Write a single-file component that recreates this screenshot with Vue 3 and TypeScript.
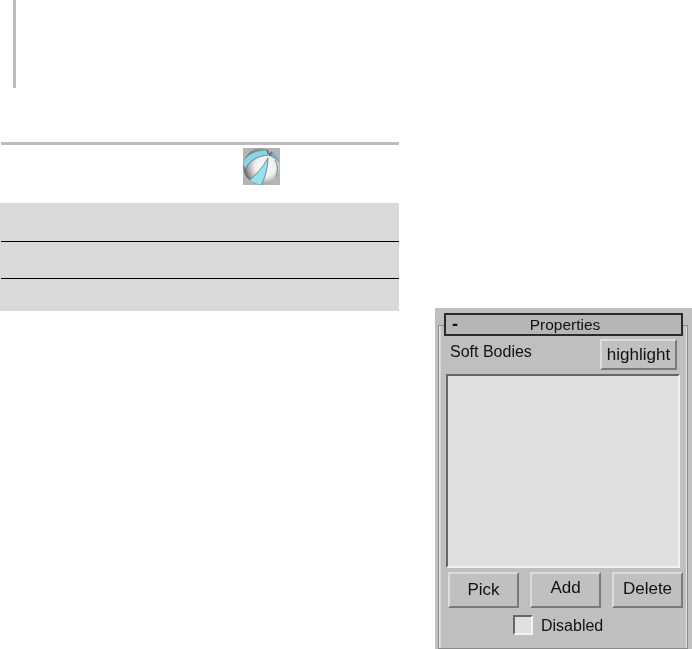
<script setup lang="ts">
const rows = [39, 37, 32]
const actions = [
  { name: 'Pick', cls: 'low' },
  { name: 'Add', cls: 'high' },
  { name: 'Delete', cls: 'mid' },
]
</script>

<template>
  <div class="page">
    <div class="left">
      <div class="note"></div>
      <div class="rule"></div>
      <div class="icon-row">
        <svg class="ball" width="37" height="37" viewBox="0 0 37 37">
          <defs>
            <radialGradient id="shade" cx="0.6" cy="0.5" r="0.58">
              <stop offset="0" stop-color="#ffffff" />
              <stop offset="0.5" stop-color="#eeeeee" />
              <stop offset="0.82" stop-color="#a4a4a4" />
              <stop offset="1" stop-color="#626262" />
            </radialGradient>
            <clipPath id="disc">
              <circle cx="18.5" cy="18.5" r="18.2" />
            </clipPath>
          </defs>
          <rect width="37" height="37" fill="#b4b4b4" />
          <circle cx="18.5" cy="18.5" r="18.2" fill="url(#shade)" />
          <g clip-path="url(#disc)" stroke="#6a8a8f" stroke-width="1">
            <path d="M-1 15 C3 7 11 2 24 2 L25 7 C15 8 7 12 2 21 Z" fill="#86d6e3" />
            <path d="M26 7 L36 2 L38 16 C35 12 31 9 26 7 Z" fill="#6fb6c0" />
            <path d="M25 10 C25 20 22 29 18 38 L6 33 C13 27 20 19 25 10 Z" fill="#93e2ee" />
            <path d="M32 12 C35 17 35 23 33 29" fill="none" />
            <path d="M24 2 L27 7 M30 2 L26 8" fill="none" stroke="#4a6064" stroke-width="1.2" />
          </g>
        </svg>
      </div>
      <div class="table">
        <div v-for="(h, i) in rows" :key="i" class="table-row" :style="{ height: h + 'px' }">
          <div v-if="i < rows.length - 1" class="row-line"></div>
        </div>
      </div>
    </div>

    <div class="right">
      <div class="panel">
        <div class="group">
          <div class="titlebar">
            <span class="minus">-</span>
            <span class="title">Properties</span>
          </div>
          <div class="top-row">
            <span class="label">Soft Bodies</span>
            <button class="btn highlight">highlight</button>
          </div>
          <div class="listbox"></div>
          <div class="actions">
            <button v-for="a in actions" :key="a.name" class="btn action" :class="a.cls">{{ a.name }}</button>
          </div>
          <div class="check-row">
            <span class="check"></span>
            <span class="label">Disabled</span>
          </div>
        </div>
      </div>
    </div>
  </div>
</template>

<style>
html,
body {
  margin: 0;
  background: #fff;
}
</style>

<style scoped>
.page {
  display: flex;
  width: 692px;
  height: 649px;
  overflow: hidden;
  font-family: "Liberation Sans", Arial, sans-serif;
}
.left {
  width: 399px;
  flex: none;
}
.note {
  width: 3px;
  height: 88px;
  margin-left: 13px;
  background: #bdbdbd;
}
.rule {
  height: 3px;
  margin: 54px 0 0 1px;
  background: #bdbdbd;
}
.icon-row {
  display: flex;
  padding: 3px 0 0 243px;
}
.ball {
  filter: blur(0.5px);
}
.table {
  margin-top: 18px;
}
.table-row {
  display: flex;
  align-items: flex-end;
  box-sizing: border-box;
  padding-left: 1px;
  background: #d9d9d9;
}
.row-line {
  flex: 1;
  height: 1px;
  background: #000;
}
.right {
  flex: 1;
  padding: 308px 0 0 36px;
}
.panel {
  box-sizing: border-box;
  width: 257px;
  height: 341px;
  padding: 17px 4px 0 3px;
  background: #bfbfbf;
  filter: blur(0.35px);
}
.group {
  position: relative;
  height: 324px;
  box-sizing: border-box;
  padding: 0 4px 0 8px;
  border: 1px solid #8a8a8a;
  box-shadow: inset 1px 0 0 #e4e4e4, inset 2px 0 0 #d4d4d4, inset -1px 0 0 #e4e4e4;
}
.titlebar {
  position: relative;
  display: flex;
  justify-content: center;
  align-items: center;
  box-sizing: border-box;
  width: 239px;
  height: 23px;
  margin: -13px 0 0 -3px;
  border: 2px solid #2a2a2a;
  font-size: 15.5px;
  color: #111;
  background: #b6b6b6;
}
.minus {
  position: absolute;
  left: 6px;
  font-size: 18px;
  font-weight: bold;
}
.title {
  margin-left: 3px;
}
.top-row {
  display: flex;
  justify-content: space-between;
  margin-top: 3px;
  padding: 0 6px 0 3px;
  height: 31px;
}
.label {
  font-size: 16px;
  color: #111;
}
.top-row .label {
  padding-top: 4px;
}
.btn {
  box-sizing: border-box;
  padding: 0;
  background: #c0c0c0;
  border: 2px solid;
  border-color: #dcdcdc #7a7a7a #7a7a7a #dcdcdc;
  font: 17px "Liberation Sans", Arial, sans-serif;
  color: #111;
}
.highlight {
  width: 77px;
  height: 31px;
}
.listbox {
  box-sizing: border-box;
  width: 234px;
  height: 194px;
  margin: 4px 0 0 -1px;
  background: #e0e0e0;
  border: 2px solid;
  border-color: #666 #f2f2f2 #f2f2f2 #666;
}
.actions {
  display: flex;
  justify-content: space-between;
  margin-top: 4px;
  padding-left: 1px;
}
.action {
  width: 71px;
  height: 36px;
  padding-bottom: 2px;
}
.low {
  padding: 0;
}
.high {
  padding-bottom: 4px;
}
.check-row {
  display: flex;
  align-items: center;
  gap: 8px;
  margin-top: 7px;
  padding-left: 66px;
  height: 20px;
}
.check-row .label {
  padding-top: 1px;
}
.check {
  box-sizing: border-box;
  width: 20px;
  height: 20px;
  background: #e0e0e0;
  border: 2px solid;
  border-color: #666 #f2f2f2 #f2f2f2 #666;
}
</style>
